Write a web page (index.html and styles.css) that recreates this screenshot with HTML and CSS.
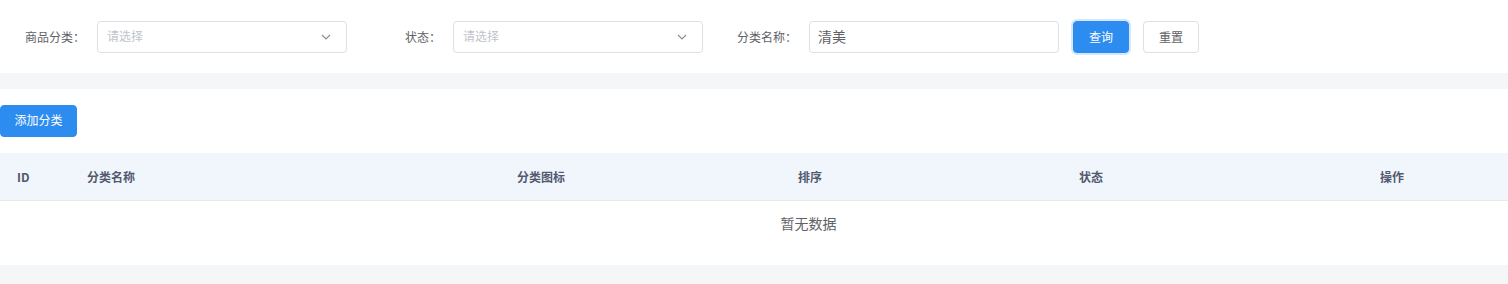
FILE: index.html
```html
<!DOCTYPE html>
<html lang="zh-CN">
<head>
  <meta charset="UTF-8">
  <meta name="viewport" content="width=device-width, initial-scale=1.0">
  <title>商品分类</title>
  <link rel="stylesheet" href="styles.css">
</head>
<body>
  <!-- Search bar -->
  <div class="search-bar">
    <div class="form-item">
      <label class="form-label">商品分类：</label>
      <div class="select">
        <span class="placeholder">请选择</span>
        <svg class="arrow" width="10" height="6" viewBox="0 0 10 6"><path d="M1 1 L5 5 L9 1" fill="none" stroke="#8a8e99" stroke-width="1.2"/></svg>
      </div>
    </div>
    <div class="form-item">
      <label class="form-label">状态：</label>
      <div class="select">
        <span class="placeholder">请选择</span>
        <svg class="arrow" width="10" height="6" viewBox="0 0 10 6"><path d="M1 1 L5 5 L9 1" fill="none" stroke="#8a8e99" stroke-width="1.2"/></svg>
      </div>
    </div>
    <div class="form-item">
      <label class="form-label">分类名称：</label>
      <input class="input" type="text" value="清美">
    </div>
    <button class="btn btn-primary btn-focus">查询</button>
    <button class="btn">重置</button>
  </div>

  <!-- Table area -->
  <div class="content">
    <button class="btn btn-primary btn-add">添加分类</button>
    <table class="table">
      <colgroup>
        <col style="width:70px">
        <col style="width:298px">
        <col style="width:346px">
        <col style="width:192px">
        <col style="width:370px">
        <col style="width:232px">
      </colgroup>
      <thead>
        <tr>
          <th class="left">ID</th>
          <th class="left">分类名称</th>
          <th>分类图标</th>
          <th>排序</th>
          <th>状态</th>
          <th>操作</th>
        </tr>
      </thead>
      <tbody>
        <tr>
          <td class="empty" colspan="6">暂无数据</td>
        </tr>
      </tbody>
    </table>
  </div>
</body>
</html>
```

FILE: styles.css
```css
/* Page */
body {
  margin: 0;
  background: #f5f6f7;
  font-family: "Noto Sans CJK SC", "Noto Sans", sans-serif;
  font-size: 12px;
  color: #606266;
}

/* Search bar */
.search-bar {
  background: #fff;
  display: flex;
  align-items: center;
  padding: 21px 0 20px 17px;
  margin-bottom: 16px;
}

.form-item {
  display: flex;
  align-items: center;
  margin-right: 26px;
}

.form-item:nth-child(3) {
  margin-right: 14px;
}

.form-label {
  width: 80px;
  box-sizing: border-box;
  padding: 0 12px 2px 0;
  text-align: right;
  color: #606266;
  font-size: 12px;
}

.select,
.input {
  width: 250px;
  height: 32px;
  box-sizing: border-box;
  border: 1px solid #dcdfe6;
  border-radius: 4px;
  background: #fff;
}

.select {
  display: flex;
  align-items: center;
  justify-content: space-between;
  padding: 0 15px 0 9px;
}

.placeholder {
  color: #c0c4cc;
  font-size: 12px;
  padding-bottom: 3px;
}

.arrow {
  display: block;
}

.input {
  padding: 0 8px 2px;
  font-family: inherit;
  font-size: 14px;
  color: #606266;
  outline: none;
}

/* Buttons */
.btn {
  height: 32px;
  width: 56px;
  border: 1px solid #dcdfe6;
  border-radius: 4px;
  background: #fff;
  color: #606266;
  font-family: inherit;
  font-size: 12px;
  padding: 0 0 2px;
  margin-right: 14px;
  cursor: pointer;
}

.btn-primary {
  background: #2d8cf0;
  border-color: #2d8cf0;
  color: #fff;
}

.btn-focus {
  box-shadow: 0 0 0 2px #d4e7fc;
}

.btn-add {
  width: 77px;
  display: block;
  margin: 0 0 16px 0;
  padding-bottom: 3px;
}

/* Content */
.content {
  background: #fff;
  padding: 16px 0;
}

.table {
  width: 100%;
  border-collapse: collapse;
  table-layout: fixed;
}

.table th {
  height: 47px;
  background: #f1f6fd;
  border-bottom: 1px solid #e8eaec;
  color: #515a6e;
  font-weight: bold;
  font-size: 12px;
  text-align: center;
  padding: 0;
}

.table th.left {
  text-align: left;
  padding-left: 17px;
}

.table td.empty {
  height: 43px;
  text-align: center;
  padding: 0 0 5px 109px;
  font-size: 14px;
  color: #606266;
}
```
